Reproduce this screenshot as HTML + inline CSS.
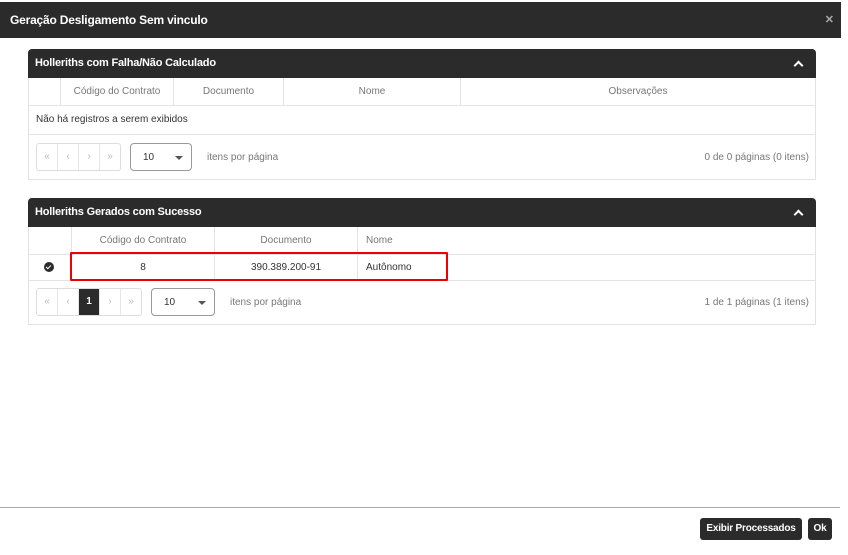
<!DOCTYPE html>
<html><head><meta charset="utf-8"><style>
*{box-sizing:border-box;margin:0;padding:0}
body{width:848px;height:555px;background:#fff;font-family:"Liberation Sans",sans-serif;position:relative;overflow:hidden;color:#333}
.abs{position:absolute}
.top{left:0;top:2px;width:841px;height:36px;background:#2b2b2b;color:#fff;font-weight:bold;font-size:12px;line-height:36px;padding-left:10px;letter-spacing:-0.2px}
.x{right:14px;top:15px;color:#aaa;font-size:11px;font-weight:bold;line-height:11px}
.ph{background:#2b2b2b;color:#fff;font-weight:bold;font-size:11px;height:29px;line-height:29px;padding-left:7px;border-radius:4px 4px 0 0;letter-spacing:-0.2px}
.panel{border:1px solid #e3e3e3;border-top:none}
.car{right:14px;top:13px;width:7px;height:7px;border-left:2.5px solid #fff;border-top:2.5px solid #fff;transform:rotate(45deg)}
.cell{position:absolute;font-size:10px;color:#777;text-align:center;border-right:1px solid #e3e3e3}
.grp{border:1px solid #ddd;border-radius:3px;display:flex;height:28px}
.grp span{flex:1;border-right:1px solid #e6e6e6;color:#bbb;font-size:10px;text-align:center;line-height:26px}
.grp span:last-child{border-right:none}
.sel{border:1px solid #999;border-radius:4px;height:28px;font-size:10px;line-height:28px;padding-left:12px}
.tri{position:absolute;right:8px;top:12px;border-left:4px solid transparent;border-right:4px solid transparent;border-top:4px solid #555}
.t10{font-size:10px;color:#777}
.btn{background:#2b2b2b;color:#fff;font-weight:bold;font-size:10px;border-radius:3px;height:22px;line-height:22px;text-align:center;letter-spacing:-0.2px}
</style></head><body>
<div class="abs top">Geração Desligamento Sem vinculo</div>
<div class="abs x">✕</div>

<div class="abs ph" style="left:28px;top:49px;width:788px">Holleriths com Falha/Não Calculado<div class="abs car"></div></div>
<div class="abs panel" style="left:28px;top:78px;width:788px;height:102px">
 <div class="abs" style="left:0;top:27px;width:786px;border-top:1px solid #e3e3e3"></div>
 <div class="abs" style="left:0;top:56px;width:786px;border-top:1px solid #e3e3e3"></div>
 <div class="cell" style="left:0;top:0;width:32px;height:27px"></div>
 <div class="cell" style="left:32px;top:0;width:113px;height:27px;line-height:27px">Código do Contrato</div>
 <div class="cell" style="left:145px;top:0;width:110px;height:27px;line-height:27px">Documento</div>
 <div class="cell" style="left:255px;top:0;width:177px;height:27px;line-height:27px">Nome</div>
 <div class="cell" style="left:432px;top:0;width:354px;height:27px;line-height:27px;border-right:none">Observações</div>
 <div class="abs" style="left:7px;top:27px;line-height:29px;font-size:10px;color:#333">Não há registros a serem exibidos</div>
 <div class="abs grp" style="left:7px;top:65px;width:85px"><span>«</span><span>‹</span><span>›</span><span>»</span></div>
 <div class="abs sel" style="left:101px;top:65px;width:62px">10<div class="tri"></div></div>
 <div class="abs t10" style="left:178px;top:74px">itens por página</div>
 <div class="abs t10" style="right:6px;top:74px">0 de 0 páginas (0 itens)</div>
</div>

<div class="abs ph" style="left:28px;top:198px;width:788px">Holleriths Gerados com Sucesso<div class="abs car"></div></div>
<div class="abs panel" style="left:28px;top:227px;width:788px;height:98px">
 <div class="abs" style="left:0;top:27px;width:786px;border-top:1px solid #e3e3e3"></div>
 <div class="abs" style="left:0;top:53px;width:786px;border-top:1px solid #e3e3e3"></div>
 <div class="cell" style="left:0;top:0;width:43px;height:53px"></div>
 <div class="cell" style="left:43px;top:0;width:143px;height:53px;line-height:27px">Código do Contrato<div style="color:#333">8</div></div>
 <div class="cell" style="left:186px;top:0;width:143px;height:53px;line-height:27px">Documento<div style="color:#333">390.389.200-91</div></div>
 <div class="cell" style="left:329px;top:0;width:457px;height:53px;line-height:27px;text-align:left;padding-left:8px;border-right:none">Nome<div style="color:#333">Autônomo</div></div>
 <div class="abs" style="left:15px;top:35px;width:10px;height:10px;border-radius:50%;background:#2b2b2b"><div style="position:absolute;left:3px;top:2px;width:3px;height:5px;border-right:1.5px solid #fff;border-bottom:1.5px solid #fff;transform:rotate(45deg)"></div></div>
 <div class="abs grp" style="left:7px;top:61px;width:106px"><span>«</span><span>‹</span><span style="background:#2b2b2b;color:#fff;font-weight:bold">1</span><span>›</span><span>»</span></div>
 <div class="abs sel" style="left:122px;top:61px;width:64px">10<div class="tri"></div></div>
 <div class="abs t10" style="left:201px;top:70px">itens por página</div>
 <div class="abs t10" style="right:6px;top:70px">1 de 1 páginas (1 itens)</div>
</div>
<div class="abs" style="left:70px;top:252px;width:378px;height:29px;border:2px solid #e00;border-radius:1px"></div>

<div class="abs" style="left:0;top:507px;width:840px;border-top:1px solid #aaa"></div>
<div class="abs btn" style="left:700px;top:518px;width:102px">Exibir Processados</div>
<div class="abs btn" style="left:808px;top:518px;width:24px">Ok</div>
</body></html>
